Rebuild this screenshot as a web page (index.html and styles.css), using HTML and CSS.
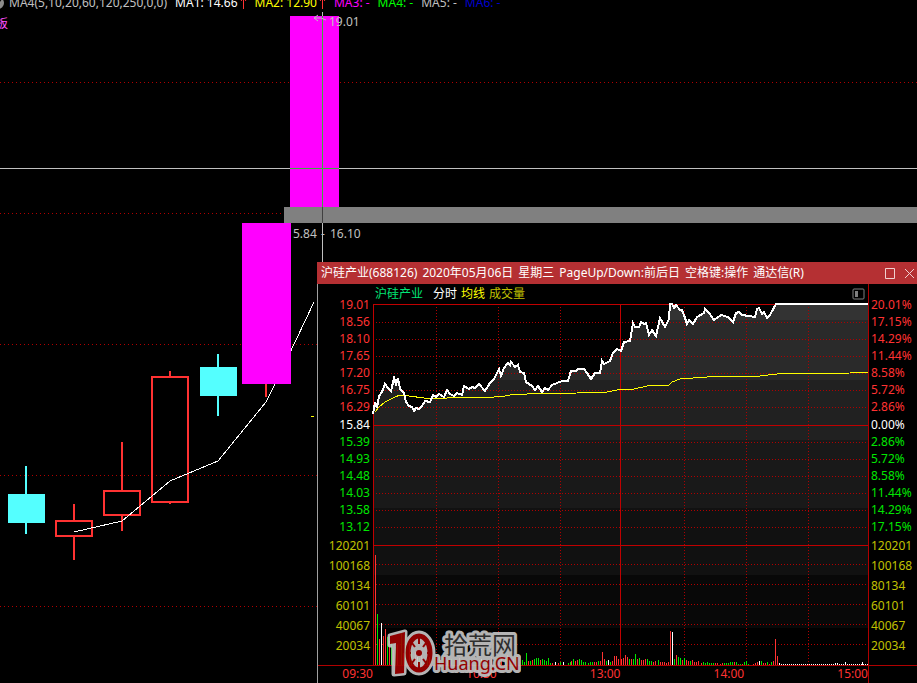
FILE: index.html
```html
<!DOCTYPE html>
<html lang="zh-CN">
<head>
    <meta charset="UTF-8">
    <meta name="viewport" content="width=device-width, initial-scale=1.0">
    <title>沪硅产业(688126)</title>
    <link rel="stylesheet" href="styles.css">
</head>
<body>
    <div class="screen">
        <header class="indicators">
            <svg class="toggle" width="12" height="12" viewBox="0 0 12 12">
                <circle cx="6" cy="6" r="6" fill="#8c8c8c"/>
                <path d="M3 6l2 2 4-5" fill="none" stroke="#000"/>
            </svg>
            <span class="params">MA4(5,10,20,60,120,250,0,0)</span>
            <span class="ma1">MA1: 14.66</span>
            <svg class="up" width="7" height="12" viewBox="0 0 7 12"><path d="M3.500 12V2M1 4l2.500-3 2.500 3"/></svg>
            <span class="ma2">MA2: 12.90</span>
            <svg class="up" width="7" height="12" viewBox="0 0 7 12"><path d="M3.500 12V2M1 4l2.500-3 2.500 3"/></svg>
            <span class="ma3">MA3: -</span>
            <span class="ma4">MA4: -</span>
            <span class="ma5">MA5: -</span>
            <span class="ma6">MA6: -</span>
        </header>

        <!-- daily candles -->
        <svg class="kline" width="100%" height="100%">
            <g class="grid">
                <line x1="0" x2="100%" y1="82.5" y2="82.5"/>
                <line x1="0" x2="100%" y1="213.5" y2="213.5"/>
                <line x1="0" x2="100%" y1="344.5" y2="344.5"/>
                <line x1="0" x2="100%" y1="475.5" y2="475.5"/>
                <line x1="0" x2="100%" y1="606.5" y2="606.5"/>
            </g>
            <g class="down">
                <rect x="8" y="494" width="37" height="29"/>
                <rect x="25" y="466" width="2" height="68"/>
                <rect x="200" y="367" width="37" height="29"/>
                <rect x="217" y="354" width="2" height="62"/>
            </g>
            <g class="rise">
                <path d="M56 521h36v15H56zM74 504v17M74 536v24"/>
                <path d="M104 491h36v24h-36zM122 442v49M122 515v16"/>
                <path d="M152 377h36v125h-36zM170 371v6M170 502v2"/>
                <path d="M266 384v13"/>
            </g>
            <polyline class="ma-line" points="74,532 122,521 170,481 218,461 266,402 275,384 296,340 314,302"/>
            <path class="ma-next" d="M311 416.500h3"/>
            <g class="limit">
                <rect x="242" y="223" width="49" height="161"/>
                <rect x="290" y="16" width="49" height="191"/>
            </g>
            <rect class="gap-band" x="284" y="207" width="100%" height="16"/>
            <g class="cross">
                <path d="M322.500 12V262"/>
                <line x1="0" x2="100%" y1="168.5" y2="168.5"/>
                <path class="over-limit" d="M322.500 16V207M290 168.500h49"/>
                <path class="over-band" d="M322.500 207v16"/>
                <path class="pointer" d="M326 20l-5-2h-6M318 15l-4 3 4 3"/>
            </g>
            <text x="329" y="26">19.01</text>
            <text x="293" y="238">5.84</text>
            <text x="321" y="238">-</text>
            <text x="330" y="238">16.10</text>
            <text class="board" x="-4" y="28">板</text>
        </svg>

        <section class="window">
            <div class="titlebar">
                <div class="title">
                    <span>沪硅产业(688126)</span>
                    <span>2020年05月06日</span>
                    <span>星期三</span>
                    <span>PageUp/Down:前后日</span>
                    <span>空格键:操作</span>
                    <span>通达信(R)</span>
                </div>
                <button class="win-btn" aria-label="最大化">
                    <svg width="11" height="11" viewBox="0 0 11 11"><path d="M.5.5h9v10h-9z"/></svg>
                </button>
                <button class="win-btn" aria-label="关闭">
                    <svg width="11" height="11" viewBox="0 0 11 11"><path d="M1 1l9 9M10 1l-9 9"/></svg>
                </button>
            </div>

            <div class="intraday">
                <div class="legend">
                    <span class="name">沪硅产业</span>
                    <span class="price">分时</span>
                    <span class="average">均线</span>
                    <span class="volume">成交量</span>
                    <button class="panel-btn" aria-label="侧栏">
                        <svg width="13" height="12" viewBox="0 0 13 12">
                            <rect x="1" y="1" width="11" height="10" rx="1" fill="none" stroke="#808080"/>
                            <path d="M3 3h3v6H3z" fill="#808080"/>
                        </svg>
                    </button>
                </div>

                <div class="axis axis-left">
                    <span class="red">19.01</span>
                    <span class="red">18.56</span>
                    <span class="red">18.10</span>
                    <span class="red">17.65</span>
                    <span class="red">17.20</span>
                    <span class="red">16.75</span>
                    <span class="red">16.29</span>
                    <span class="white">15.84</span>
                    <span class="green">15.39</span>
                    <span class="green">14.93</span>
                    <span class="green">14.48</span>
                    <span class="green">14.03</span>
                    <span class="green">13.58</span>
                    <span class="green">13.12</span>
                    <span>120201</span>
                    <span>100168</span>
                    <span>80134</span>
                    <span>60101</span>
                    <span>40067</span>
                    <span>20034</span>
                </div>

                <svg class="plot" viewBox="0 0 495 361" preserveAspectRatio="none">
                    <defs>
                        <clipPath id="under">
                            <path d="M0 110L2 98 4 104 6 92 9 88 12 80 15 84 18 87 21 74 23 80 25 74 27 85 31 89 33 98 36 102 39 103 41 107 43 104 46 105 49 102 52 97 57 98 60 91 63 93 66 90 71 93 74 86 77 90 81 92 84 89 89 91 91 82 96 85 106 80 112 87 117 79 121 75 126 65 128 72 131 64 135 59 138 58 142 63 145 61 147 68 151 69 153 78 159 82 162 86 165 82 169 88 172 84 175 86 179 81 189 77 195 77 198 67 203 67 205 65 211 65 214 69 218 75 222 69 227 69 229 57 231 60 237 57 240 49 244 45 248 47 251 38 257 37 260 19 262 23 266 23 268 18 273 19 276 31 279 26 283 32 287 14 292 23 296 15 297 0 301 4 303 1 307 6 309 6 314 20 316 16 320 20 324 13 331 9 332 5 336 9 341 16 348 11 355 13 360 18 363 9 366 8 369 11 382 13 384 5 386 4 389 10 391 8 394 14 397 11 403 0H495V361H0z"/>
                        </clipPath>
                    </defs>
                    <g clip-path="url(#under)">
                        <rect width="495" height="16" fill="#333"/>
                        <rect y="16" width="495" height="60" fill="#2a2a2a"/>
                        <rect y="76" width="495" height="60" fill="#212121"/>
                        <rect y="136" width="495" height="68" fill="#191919"/>
                        <rect y="204" width="495" height="67" fill="#111"/>
                        <rect y="271" width="495" height="53" fill="#080808"/>
                    </g>
                    <path class="grid" d="M0 18.500H495M0 35.500H495M0 52.500H495M0 69.500H495M0 86.500H495M0 103.500H495M0 138.500H495M0 155.500H495M0 172.500H495M0 189.500H495M0 206.500H495M0 223.500H495M0 260.500H495M0 280.500H495M0 300.500H495M0 320.500H495M0 340.500H495"/>
                    <path class="grid" d="M63.500 0V361M125.500 0V361M187.500 0V361M311.500 0V361M373.500 0V361M435.500 0V361"/>
                    <path class="frame" d="M0 .5H495M.5 0V361M0 121.500H495M0 241.500H495M247.500 0V361"/>

                    <g class="bars">
                        <path class="r" d="M2.500 361V251M6.500 361V335M10.500 361V332M12.500 361V325M16.500 361v-24M20.500 361v-15M24.500 361v-20M30.500 361v-12M36.500 361v-22M42.500 361v-13M48.500 361v-10M56.500 361v-8M64.500 361v-6M74.500 361v-5M86.500 361v-7M98.500 361v-5M118.500 361v-8M128.500 361v-6M134.500 361v-10M140.500 361v-6"/>
                        <path class="g" d="M4.500 361V310M14.500 361V333M18.500 361v-22M22.500 361v-18M28.500 361v-32M32.500 361v-30M38.500 361v-13M46.500 361v-7M54.500 361v-6M66.500 361v-8M78.500 361v-6M92.500 361v-5M106.500 361v-5M124.500 361v-7M132.500 361v-6M144.500 361v-9"/>
                        <path class="w" d="M8.500 361V319M44.500 361v-8M108.500 361v-6"/>
                        <path class="g" d="M149.500 361v-5M151.500 361v-3M153.500 361v-12M157.500 361v-4M161.500 361v-6M163.500 361v-7M165.500 361v-7M169.500 361v-6M171.500 361v-5M173.500 361v-4M175.500 361v-7M177.500 361v-2M187.500 361v-3M195.500 361v-2M197.500 361v-3M200.500 361v-6M206.500 361v-6M208.500 361v-5M210.500 361v-3M212.500 361v-3M215.500 361v-2M217.500 361v-3M219.500 361v-3M225.500 361v-4M233.500 361v-4M237.500 361v-3M256.500 361v-6M260.500 361v-6M262.500 361v-11M266.500 361v-7M274.500 361v-6M276.500 361v-4M278.500 361v-4M285.500 361v-5M301.500 361v-6M305.500 361v-8M307.500 361v-7M311.500 361v-7M317.500 361v-4"/>
                        <path class="r" d="M155.500 361v-4M159.500 361v-5M167.500 361v-5M179.500 361v-2M185.500 361v-2M198.500 361v-4M202.500 361v-4M204.500 361v-5M221.500 361v-3M223.500 361v-3M227.500 361v-4M229.500 361v-13M231.500 361v-6M239.500 361v-4M241.500 361v-9M243.500 361v-9M245.500 361v-6M248.500 361v-6M250.500 361v-7M252.500 361v-10M254.500 361v-8M258.500 361v-6M264.500 361v-6M268.500 361v-5M270.500 361v-5M272.500 361v-6M280.500 361v-3M282.500 361v-4M287.500 361v-3M289.500 361v-3M291.500 361v-3M293.500 361v-2M295.500 361v-3M297.500 361v-34M303.500 361v-10M309.500 361v-5M313.500 361v-5M315.500 361v-4M319.500 361v-5M321.500 361v-3M323.500 361v-3M325.500 361v-4"/>
                        <path class="w" d="M182.500 361v-3M190.500 361v-3M235.500 361v-5M299.500 361v-33"/>
                        <path class="g" d="M330.500 361v-3M332.500 361v-2M334.500 361v-3M336.500 361v-2M338.500 361v-2M340.500 361v-2M351.500 361v-2M353.500 361v-2M355.500 361v-2M357.500 361v-3M359.500 361v-3M363.500 361v-3M365.500 361v-1M367.500 361v-1M371.500 361v-3M373.500 361v-4M375.500 361v-1M388.500 361v-4M394.500 361v-3M398.500 361v-3"/>
                        <path class="r" d="M328.500 361v-2M342.500 361v-2M344.500 361v-2M347.500 361v-1M349.500 361v-2M361.500 361v-3M369.500 361v-1M380.500 361v-1M382.500 361v-2M384.500 361v-3M390.500 361v-2M392.500 361v-2M396.500 361v-1M400.500 361v-4M402.500 361v-26M404.500 361v-9"/>
                        <path class="w" d="M386.500 361v-4M406.500 361v-2M462.500 361v-2M464.500 361v-2M472.500 361v-3M489.500 361v-3"/>
                        <path class="w ticks" d="M408 360.500H495"/>
                    </g>

                    <polyline class="avg-line" points="2,108 6,103 12,98 22,93 27,91 36,92 51,94 74,94 77,93 121,93 132,92 137,91 154,90 204,89 207,88 234,88 244,86 261,85 274,82 296,81 299,78 307,75 334,73 361,72 387,72 404,70 477,69 495,68"/>
                    <polyline class="price-line" points="0,110 2,98 4,104 6,92 9,88 12,80 15,84 18,87 21,74 23,80 25,74 27,85 31,89 33,98 36,102 39,103 41,107 43,104 46,105 49,102 52,97 57,98 60,91 63,93 66,90 71,93 74,86 77,90 81,92 84,89 89,91 91,82 96,85 99,83 102,84 106,80 112,87 117,79 121,75 126,65 128,72 131,64 135,59 137,61 138,58 142,63 145,61 147,68 151,69 153,78 159,82 162,86 165,82 169,88 172,84 175,86 179,81 189,77 195,77 198,67 203,67 205,65 211,65 214,69 218,75 222,69 227,69 229,57 231,60 237,57 240,49 244,45 248,47 251,38 257,37 260,19 262,23 266,23 268,18 271,20 273,19 276,31 279,26 283,32 287,14 292,23 296,15 297,0 299,0 301,4 303,1 307,6 309,6 312,14 314,20 316,16 320,20 324,13 331,9 332,5 336,9 341,16 348,11 355,13 360,18 363,9 366,8 369,11 376,12 382,13 384,5 386,4 389,10 391,8 394,14 397,11 403,0 495,0"/>
                </svg>

                <div class="axis axis-right">
                    <span class="red">20.01%</span>
                    <span class="red">17.15%</span>
                    <span class="red">14.29%</span>
                    <span class="red">11.44%</span>
                    <span class="red">8.58%</span>
                    <span class="red">5.72%</span>
                    <span class="red">2.86%</span>
                    <span class="white">0.00%</span>
                    <span class="green">2.86%</span>
                    <span class="green">5.72%</span>
                    <span class="green">8.58%</span>
                    <span class="green">11.44%</span>
                    <span class="green">14.29%</span>
                    <span class="green">17.15%</span>
                    <span>120201</span>
                    <span>100168</span>
                    <span>80134</span>
                    <span>60101</span>
                    <span>40067</span>
                    <span>20034</span>
                </div>

                <div class="times">
                    <span>09:30</span>
                    <span>10:30</span>
                    <span>13:00</span>
                    <span>14:00</span>
                    <span>15:00</span>
                </div>
            </div>

            <svg class="watermark" width="134" height="50" viewBox="0 0 134 50">
                <g class="halo">
                    <path d="M3 7l15-4-1 41-10 1V15l-4 1z"/>
                    <ellipse cx="32" cy="24" rx="14" ry="20"/>
                </g>
                <path class="one" d="M3 7l15-4-1 41-9 1 1-31-6 1z"/>
                <ellipse class="ring" cx="32" cy="24" rx="11" ry="17"/>
                <path class="teeth" d="M32 9v6M32 33v6M24 24h-4M40 24h4M25 14l3 4M39 14l-3 4M25 34l3-4M39 34l-3-4"/>
                <circle class="hub" cx="32" cy="24" r="3"/>
                <text class="cn" x="57" y="25">拾荒网</text>
                <text class="en" x="47" y="41">Huang.CN</text>
            </svg>
        </section>
    </div>
</body>
</html>
```
FILE: styles.css
```css
* {
    box-sizing: border-box;
}

body {
    margin: 0;
    background-color: #000;
    color: #c0c0c0;
    font-family: "Noto Sans", "Noto Sans CJK SC", sans-serif;
    font-size: 12px;
    line-height: 16px;
}

button {
    padding: 0;
    border: 0;
    background: none;
    cursor: pointer;
}

svg {
    display: block;
}

.screen {
    position: relative;
    min-height: 100vh;
    overflow: hidden;
}

.indicators {
    display: flex;
    align-items: center;
    margin-top: -5px;
    margin-left: -8px;
    white-space: nowrap;
}

.params {
    margin-left: 5px;
    margin-right: 8px;
}

.ma1 {
    color: #fff;
}

.ma2 {
    color: #ff0;
}

.ma3 {
    color: #f0f;
}

.ma4 {
    color: #0f0;
}

.ma6 {
    color: #0000d0;
}

.ma3, .ma4, .ma5 {
    margin-right: 8px;
}

.up {
    margin-left: 2px;
    margin-right: 8px;
    fill: none;
    stroke: #ff3232;
}

/* candles */
.kline {
    position: absolute;
    top: 0;
    left: 0;
}

.kline text {
    fill: #c0c0c0;
}

.kline .board {
    fill: #ff50ff;
}

.kline .grid {
    stroke: #b00000;
    stroke-dasharray: 1 3;
}

.down {
    fill: #54ffff;
}

.rise {
    fill: none;
    stroke: #ff3232;
    stroke-width: 2;
}

.limit {
    fill: #f0f;
}

.ma-line {
    fill: none;
    stroke: #fff;
    shape-rendering: crispEdges;
}

.ma-next {
    stroke: #ff0;
}

.gap-band {
    fill: #808080;
}

.cross {
    fill: none;
    stroke: #c0c0c0;
}

.cross .over-limit {
    stroke: #3fa83f;
}

.cross .over-band {
    stroke: #404040;
}

/* intraday window */
.window {
    position: absolute;
    top: 262px;
    right: 0;
    bottom: 0;
    left: 317px;
    display: flex;
    flex-direction: column;
    background-color: #000;
}

.titlebar {
    display: flex;
    align-items: center;
    gap: 8px;
    height: 22px;
    padding: 0 2px 0 4px;
    background-color: #b53033;
    color: #fff;
}

.title {
    flex: 1;
    display: flex;
    gap: 5px;
    min-width: 0;
    white-space: nowrap;
    overflow: hidden;
}

.win-btn svg {
    fill: none;
    stroke: #f0d0d0;
}

.intraday {
    flex: 1;
    display: grid;
    grid-template-columns: 55px 1fr 49px;
    grid-template-rows: 20px 1fr 18px;
    border-left: 1px solid #a0a0a0;
}

.legend {
    grid-column: 2;
    grid-row: 1;
    display: flex;
    align-items: center;
    gap: 4px;
    padding: 0 3px 0 2px;
}

.name {
    margin-right: 6px;
    color: #00e676;
}

.price {
    color: #fff;
}

.average {
    color: #ff0;
}

.volume {
    color: #c0c000;
}

.panel-btn {
    margin-left: auto;
}

.axis {
    display: grid;
    grid-template-rows: repeat(14, 6fr) repeat(6, 7fr);
    align-items: center;
    color: #c0c000;
}

.axis-left {
    grid-column: 1;
    grid-row: 1 / 3;
    padding: 12px 3px 9px 0;
    text-align: right;
}

.axis-right {
    grid-column: 3;
    grid-row: 1 / 4;
    padding: 12px 0 27px 2px;
    border-left: 1px solid #b00000;
}

.red {
    color: #ff3232;
}

.white {
    color: #fff;
}

.green {
    color: #00e600;
}

.plot {
    grid-column: 2;
    grid-row: 2;
    width: 100%;
    height: 100%;
    min-height: 0;
    overflow: visible;
}

.plot path, .plot polyline {
    fill: none;
    vector-effect: non-scaling-stroke;
}

.plot .grid {
    stroke: #b00000;
    stroke-dasharray: 1 2;
}

.frame {
    stroke: #c00000;
}

.r {
    stroke: #ff3232;
}

.g {
    stroke: #00e600;
}

.w {
    stroke: #fff;
}

.ticks {
    stroke-dasharray: 1 1;
}

.price-line {
    stroke: #fff;
    stroke-width: 2;
    shape-rendering: crispEdges;
}

.avg-line {
    stroke: #ff0;
    shape-rendering: crispEdges;
}

.times {
    grid-column: 1 / 4;
    grid-row: 3;
    display: grid;
    grid-template-columns: 55px repeat(4, 1fr);
    padding-right: 49px;
    border-top: 1px solid #b00000;
    color: #ff3232;
    text-align: right;
}

/* site mark over the chart */
.watermark {
    position: absolute;
    left: 70px;
    bottom: 4px;
    opacity: 0.9;
}

.halo {
    fill: #c8c8c8;
    stroke: #c8c8c8;
    stroke-width: 5;
    stroke-linejoin: round;
}

.one, .hub {
    fill: #a00000;
}

.ring {
    fill: #c8c8c8;
    stroke: #a00000;
    stroke-width: 5;
}

.teeth {
    stroke: #a00000;
    stroke-width: 2;
}

.watermark text {
    stroke: #c8c8c8;
    stroke-width: 6;
    stroke-linejoin: round;
    paint-order: stroke;
}

.cn {
    fill: #333;
    font-size: 24px;
}

.en {
    fill: #a00000;
    font-size: 18px;
}
```
